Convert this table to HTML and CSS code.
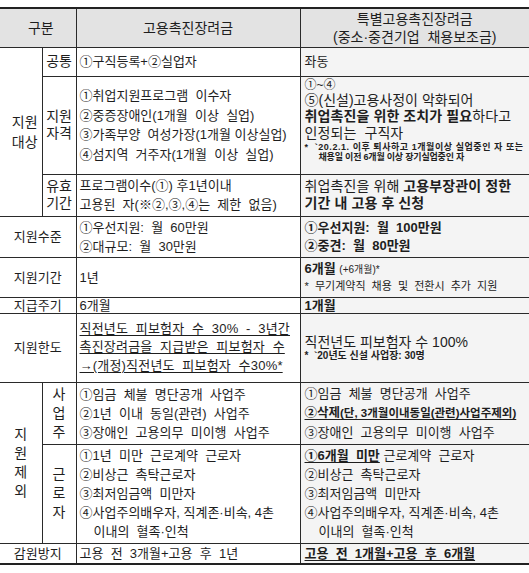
FILE: index.html
```html
<!DOCTYPE html>
<html lang="ko">
<head>
<meta charset="utf-8">
<title>고용촉진장려금 비교</title>
<link rel="stylesheet" href="styles.css">
</head>
<body>
<table class="grid">
  <colgroup>
    <col class="c-group">
    <col class="c-sub">
    <col class="c-old">
    <col class="c-new">
  </colgroup>
  <tr class="r-head">
    <th colspan="2" class="lab">구분</th>
    <th class="hd">고용촉진장려금</th>
    <th class="hd">특별고용촉진장려금<br>(중소·중견기업&nbsp; 채용보조금)</th>
  </tr>
  <tr class="r-common">
    <td rowspan="3" class="lab group">지원<br>대상</td>
    <td class="lab sub">공통</td>
    <td class="txt">①구직등록+②실업자</td>
    <td class="txt new">좌동</td>
  </tr>
  <tr class="r-qual">
    <td class="lab sub two">지원<br>자격</td>
    <td class="txt old-list">
      <div>①취업지원프로그램&nbsp; 이수자</div>
      <div>②중증장애인(1개월&nbsp; 이상&nbsp; 실업)</div>
      <div>③가족부양&nbsp; 여성가장(1개월 이상실업)</div>
      <div>④섬지역&nbsp; 거주자(1개월&nbsp; 이상&nbsp; 실업)</div>
    </td>
    <td class="txt new top">
      <div class="l-small">①~④</div>
      <div class="l-mid">⑤(신설)고용사정이 악화되어</div>
      <div class="l-big"><b>취업촉진을 위한 조치가 필요</b>하다고</div>
      <div class="l-big">인정되는&nbsp; 구직자</div>
      <div class="note wide">*&nbsp; `20.2.1. 이후 퇴사하고 1개월이상 실업중인 자 또는</div>
      <div class="note indent">채용일 이전 6개월 이상 장기실업중인 자</div>
    </td>
  </tr>
  <tr class="r-valid">
    <td class="lab sub two">유효<br>기간</td>
    <td class="txt">
      <div>프로그램이수(①) 후1년이내</div>
      <div>고용된&nbsp; 자(※②,③,④는&nbsp; 제한&nbsp; 없음)</div>
    </td>
    <td class="txt new">
      <div class="l-big">취업촉진을 위해 <b>고용부장관이 정한</b></div>
      <div class="l-big"><b>기간 내 고용 후 신청</b></div>
    </td>
  </tr>
  <tr class="r-level">
    <td colspan="2" class="lab">지원수준</td>
    <td class="txt">
      <div>①우선지원:&nbsp; 월&nbsp; 60만원</div>
      <div>②대규모:&nbsp; 월&nbsp; 30만원</div>
    </td>
    <td class="txt new">
      <div class="l-bold">①우선지원:&nbsp; 월&nbsp; 100만원</div>
      <div class="l-bold">②중견:&nbsp; 월&nbsp; 80만원</div>
    </td>
  </tr>
  <tr class="r-period">
    <td colspan="2" class="lab">지원기간</td>
    <td class="txt">1년</td>
    <td class="txt new">
      <div class="l-tight"><b>6개월</b> <span class="tiny">(+6개월)*</span></div>
      <div class="l-tight small">*&nbsp; 무기계약직&nbsp; 채용&nbsp; 및&nbsp; 전환시&nbsp; 추가&nbsp; 지원</div>
    </td>
  </tr>
  <tr class="r-cycle">
    <td colspan="2" class="lab">지급주기</td>
    <td class="txt">6개월</td>
    <td class="txt new"><b>1개월</b></td>
  </tr>
  <tr class="r-limit">
    <td colspan="2" class="lab">지원한도</td>
    <td class="txt limit">
      <div><u>직전년도&nbsp; 피보험자&nbsp; 수&nbsp; 30%&nbsp; -&nbsp; 3년간</u></div>
      <div><u>촉진장려금을&nbsp; 지급받은&nbsp; 피보험자&nbsp; 수</u></div>
      <div><u>→(개정)직전년도&nbsp; 피보험자&nbsp; 수30%*</u></div>
    </td>
    <td class="txt new">
      <div class="l-limit">직전년도 피보험자 수 100%</div>
      <div class="note strong">*&nbsp; `20년도 신설 사업장: 30명</div>
    </td>
  </tr>
  <tr class="r-owner">
    <td rowspan="2" class="lab group vert">지<br>원<br>제<br>외</td>
    <td class="lab sub vert">사<br>업<br>주</td>
    <td class="txt">
      <div>①임금&nbsp; 체불&nbsp; 명단공개&nbsp; 사업주</div>
      <div>②1년&nbsp; 이내&nbsp; 동일(관련)&nbsp; 사업주</div>
      <div>③장애인&nbsp; 고용의무&nbsp; 미이행&nbsp; 사업주</div>
    </td>
    <td class="txt new">
      <div>①임금&nbsp; 체불&nbsp; 명단공개&nbsp; 사업주</div>
      <div><u><b class="del">②삭제</b><b class="paren">(단, 3개월이내동일(관련)사업주제외)</b></u></div>
      <div>③장애인&nbsp; 고용의무&nbsp; 미이행&nbsp; 사업주</div>
    </td>
  </tr>
  <tr class="r-worker">
    <td class="lab sub vert">근<br>로<br>자</td>
    <td class="txt">
      <div>①1년&nbsp; 미만&nbsp; 근로계약&nbsp; 근로자</div>
      <div>②비상근&nbsp; 촉탁근로자</div>
      <div>③최저임금액&nbsp; 미만자</div>
      <div>④사업주의배우자, 직계존·비속, 4촌</div>
      <div class="indent">이내의&nbsp; 혈족·인척</div>
    </td>
    <td class="txt new">
      <div><u><b>①6개월&nbsp; 미만</b></u> 근로계약&nbsp; 근로자</div>
      <div>②비상근&nbsp; 촉탁근로자</div>
      <div>③최저임금액&nbsp; 미만자</div>
      <div>④사업주의배우자, 직계존·비속, 4촌</div>
      <div class="indent">이내의&nbsp; 혈족·인척</div>
    </td>
  </tr>
  <tr class="r-keep">
    <td colspan="2" class="lab">감원방지</td>
    <td class="txt">고용&nbsp; 전&nbsp; 3개월+고용&nbsp; 후&nbsp; 1년</td>
    <td class="txt new"><u><b>고용&nbsp; 전&nbsp; 1개월+고용&nbsp; 후&nbsp; 6개월</b></u></td>
  </tr>
</table>
</body>
</html>
```

FILE: styles.css
```css
html, body {
  margin: 0;
  padding: 0;
  background: #ffffff;
}

body {
  font-family: "Liberation Sans", "Noto Sans CJK KR", sans-serif;
  color: #1e1e1e;
}

.grid {
  margin-top: 7px;
  width: 529px;
  border-collapse: collapse;
  table-layout: fixed;
  border-top: 2px solid #222;
  border-bottom: 2px solid #222;
}

.c-group { width: 42px; }
.c-sub { width: 34px; }
.c-old { width: 224px; }
.c-new { width: 229px; }

.grid th,
.grid td {
  border: 1px solid #2a2a2a;
  padding: 0;
  font-size: 13px;
  line-height: 19px;
  font-weight: 400;
  vertical-align: middle;
  white-space: nowrap;
  overflow: hidden;
}

.grid tr > :first-child { border-left: none; }
.grid tr > :last-child { border-right: none; }

.r-head th {
  background: #e3e3e3;
  font-size: 14px;
  line-height: 18px;
  text-align: center;
}

.lab {
  text-align: center;
  padding-left: 6px;
}

.grid .r-head th.lab { padding-left: 6px; }

.grid td.group {
  padding-left: 8px;
  padding-right: 0;
  font-size: 14px;
  line-height: 20px;
}

.grid td.sub {
  padding: 0;
  text-align: center;
  font-size: 14px;
}

.grid td.two { line-height: 17px; }
.grid td.vert { line-height: 19px; }
.grid td.group.vert { padding-left: 0; }

.grid td.txt {
  padding-left: 3px;
  text-align: left;
}

.grid td.new {
  background: #f4f4f4;
  padding-left: 4px;
}

.grid td.top { vertical-align: top; }

.old-list div { line-height: 19.5px; }

.l-small { font-size: 12px; line-height: 14px; padding-top: 1px; }
.l-mid { font-size: 14px; line-height: 16px; }
.l-big { font-size: 14px; line-height: 17px; letter-spacing: 0.1px; }
.l-limit { font-size: 14px; line-height: 16px; }
.l-bold { font-weight: 700; font-size: 13px; line-height: 18px; }
.l-tight { line-height: 16px; }

.note {
  font-size: 9px;
  line-height: 10.5px;
  font-weight: 700;
  letter-spacing: -0.2px;
}

.note.wide { letter-spacing: 0.55px; }

.note.strong { font-size: 10px; line-height: 12px; letter-spacing: 0; }

.indent { padding-left: 14px; }

.tiny { font-size: 10px; }
.small { font-size: 11px; }

.del { font-size: 12.5px; }
.paren { font-size: 11.5px; letter-spacing: 0; }

.limit div { line-height: 18.5px; letter-spacing: 0.2px; }

b { font-weight: 700; }
u { text-decoration-thickness: 1px; text-underline-offset: 2px; }

.r-head { height: 39px; }
.r-common { height: 29px; }
.r-qual { height: 98px; }
.r-valid { height: 42px; }
.r-level { height: 41px; }
.r-period { height: 40px; }
.r-cycle { height: 15px; }
.r-limit { height: 69px; }
.r-owner { height: 62px; }
.r-worker { height: 99px; }
.r-keep { height: 21px; }

.r-cycle td { line-height: 15px; }
.r-keep td { line-height: 19px; }
```
